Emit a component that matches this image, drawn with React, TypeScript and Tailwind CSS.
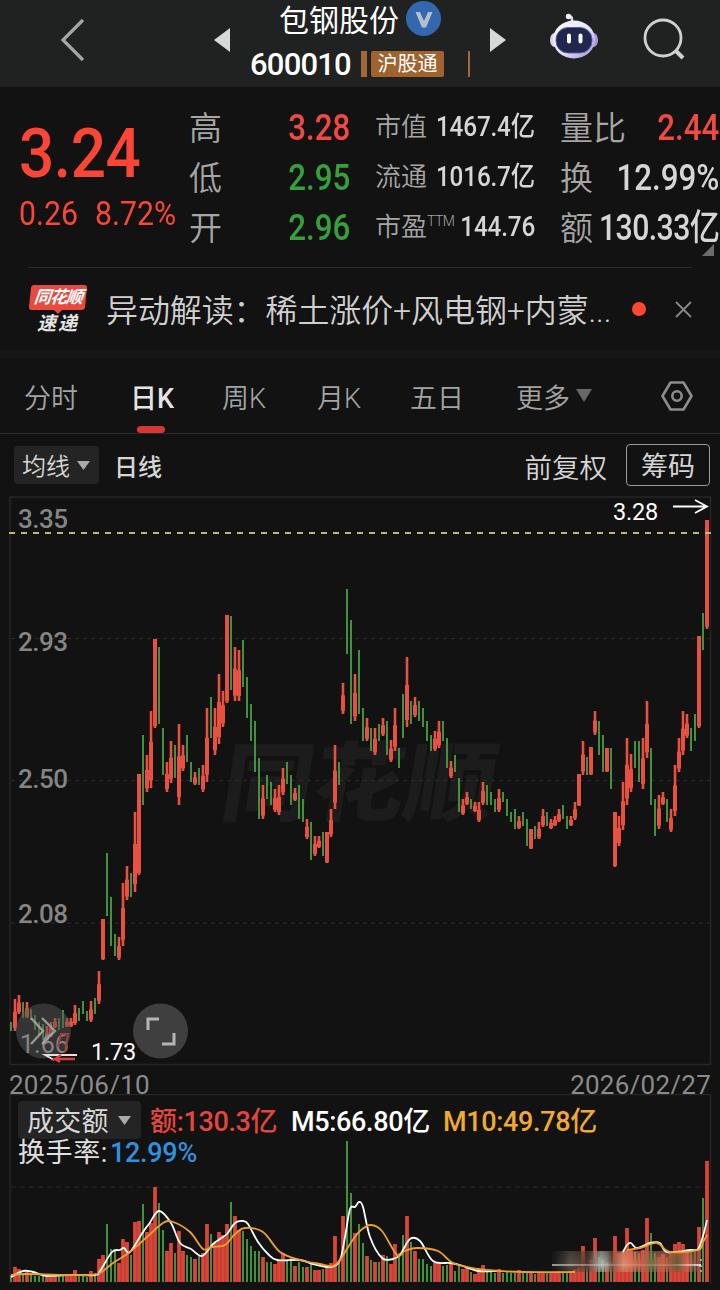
// one entry per trading day: colour (r = up, g = down, R = up with a full body), high y, low y, top of the volume bar
const DAYS = `g 1022 1031 1275|r 999 1031 1267|r 995 1014 1269|g 1002 1018 1273|r 1002 1018 1272|g 1009 1020 1275|g 1015 1030 1276|g 1022 1035 1276|g 1024 1040 1276|r 1026 1042 1274
r 1022 1037 1274|r 1018 1028 1274|g 1018 1030 1275|g 1010 1028 1275|r 1018 1027 1274|r 1018 1027 1274|r 1005 1025 1270|g 1008 1021 1275|g 1001 1014 1275|g 1011 1021 1277
r 1001 1022 1271|g 998 1014 1273|r 971 1004 1259|R 919 960 1255|g 853 916 1224|g 897 946 1249|g 934 956 1250|r 937 960 1263|r 883 946 1239|r 866 900 1242
g 873 897 1255|r 812 892 1222|R 774 875 1221|g 735 805 1204|r 755 792 1232|r 711 788 1223|R 639 728 1187|g 647 724 1203|g 728 775 1230|r 762 792 1251
r 741 783 1243|g 745 778 1253|r 724 805 1231|r 745 771 1251|g 735 762 1255|g 762 782 1257|r 772 785 1259|g 768 785 1255|r 765 792 1253|r 708 782 1224
g 697 738 1234|r 708 755 1243|r 674 744 1232|r 691 727 1235|R 615 703 1224|g 616 690 1202|r 647 701 1216|r 650 701 1230|g 640 687 1231|g 677 718 1239
g 704 741 1246|g 721 772 1251|g 758 819 1251|r 785 819 1257|g 775 799 1262|g 782 805 1262|r 789 812 1264|r 785 815 1260|r 768 795 1253|g 762 784 1260
g 775 805 1257|r 788 801 1266|g 785 819 1262|g 799 822 1267|r 819 839 1267|g 822 860 1264|r 836 856 1270|r 836 848 1270|g 832 856 1269|R 832 863 1267
r 809 837 1263|r 745 809 1236|g 762 785 1260|r 683 714 1216|g 589 654 1141|g 620 724 1193|r 674 721 1233|g 650 714 1224|g 708 741 1243|r 718 741 1256
g 728 751 1260|r 728 755 1262|g 724 741 1262|r 718 736 1255|g 721 755 1256|r 740 762 1264|r 708 751 1244|g 748 768 1253|g 694 738 1235|r 657 727 1216
g 701 724 1242|r 697 717 1251|g 701 721 1259|g 708 727 1259|g 721 741 1264|g 735 751 1266|r 731 751 1263|r 721 748 1263|g 721 741 1266|g 738 768 1265
r 761 778 1262|g 755 772 1271|g 778 812 1265|r 799 815 1269|r 792 805 1268|g 799 809 1272|r 802 812 1274|r 802 822 1272|r 782 805 1265|g 785 805 1272
g 792 805 1272|g 799 812 1273|r 789 812 1269|g 792 802 1273|g 799 816 1272|g 812 822 1273|g 809 829 1273|r 816 829 1270|g 812 826 1273|g 819 846 1272
R 829 849 1272|g 826 839 1274|r 822 839 1273|r 809 827 1272|g 812 826 1273|r 819 829 1272|r 816 826 1272|r 809 822 1271|g 805 819 1271|g 816 829 1272
r 816 826 1271|r 802 820 1269|R 774 806 1267|r 741 775 1246|g 757 775 1266|R 747 775 1260|r 711 735 1238|g 721 755 1257|g 735 772 1260|R 748 772 1262
g 748 789 1262|R 812 867 1236|r 816 846 1253|r 782 830 1252|r 738 805 1228|r 754 792 1250|g 741 768 1252|g 741 782 1253|r 738 789 1250|r 701 758 1218
g 748 805 1233|g 799 836 1253|r 795 829 1257|r 792 805 1254|g 799 822 1257|r 809 832 1252|r 765 816 1244|r 738 772 1242|r 711 755 1244|r 714 738 1250
g 728 751 1252|g 714 741 1252|R 636 728 1227|g 613 650 1198|R 520 629 1161`
    .split(/[|\n]/)
    .map((day, i) => {
        const [kind, high, low, volume] = day.trim().split(" ")
        return { x: 11 + i * 4, up: kind !== "g", full: kind === "R", high: +high, low: +low, volume: +volume }
    })

const M5 = [[11,1277],[23,1271],[33,1272],[47,1276],[67,1275],[95,1275],[100,1271],[112,1252],[120,1250],[124,1248],[130,1252],[143,1232],[149,1224],[159,1211],[171,1223],[180,1243],[191,1249],[202,1256],[213,1244],[220,1239],[227,1234],[235,1223],[243,1221],[248,1224],[258,1242],[268,1254],[277,1260],[300,1260],[313,1264],[331,1267],[340,1260],[345,1237],[350,1209],[355,1207],[359,1202],[363,1207],[370,1237],[382,1258],[393,1259],[400,1255],[410,1239],[420,1241],[433,1261],[450,1263],[460,1265],[478,1271],[497,1271],[560,1272],[600,1268],[615,1256],[623,1252],[627,1245],[631,1243],[637,1248],[650,1243],[660,1243],[667,1252],[690,1250],[698,1249],[703,1236],[707,1220]]
const M10 = [[11,1275],[27,1274],[67,1275],[97,1274],[113,1263],[130,1252],[147,1237],[163,1223],[173,1222],[190,1232],[203,1249],[212,1247],[225,1245],[235,1234],[245,1228],[263,1232],[280,1252],[300,1260],[320,1264],[333,1266],[340,1260],[352,1241],[361,1230],[371,1225],[382,1231],[397,1255],[405,1251],[417,1248],[438,1251],[453,1263],[478,1269],[500,1271],[523,1272],[575,1272],[600,1268],[613,1260],[627,1250],[640,1248],[657,1243],[670,1252],[698,1250],[703,1242],[707,1235]]

// rounded line through the given points
const smooth = (points: number[][]) =>
    points.reduce((d, [x, y], i) => {
        if (i === 0) return `M${x} ${y}`
        const [px, py] = points[i - 1]
        const [ax, ay] = points[i - 2] ?? [px, py]
        const [nx, ny] = points[i + 1] ?? [x, y]
        return `${d}C${px + (x - ax) / 6} ${py + (y - ay) / 6} ${x - (nx - px) / 6} ${y - (ny - py) / 6} ${x} ${y}`
    }, "")

const RED = "#e8503f"
const GREEN = "#41913f"

const Robot = () => (
    <svg className="h-12 w-12" viewBox="0 0 48 48">
        <defs>
            <linearGradient id="shell" x1="0" y1="0" x2="1" y2="1">
                <stop offset="0" stopColor="#fff" />
                <stop offset=".55" stopColor="#e6e2f8" />
                <stop offset="1" stopColor="#9a86dc" />
            </linearGradient>
        </defs>
        <path d="M22 10V7q0-3-4-3" fill="none" stroke="#dcdcf0" strokeWidth="2.500" />
        <circle cx="18.500" cy="4.500" r="2.700" fill="#f2f2fa" />
        <ellipse cx="4.500" cy="28" rx="4.500" ry="7" fill="#d7d3f1" />
        <ellipse cx="43.500" cy="28" rx="4.500" ry="7" fill="#a79ae2" />
        <ellipse cx="24" cy="27.500" rx="21" ry="19" fill="url(#shell)" />
        <rect x="6" y="15.500" width="36" height="25.500" rx="12" fill="#20264d" stroke="#59629a" strokeWidth="1" />
        <path d="M19 23.500v6M30.500 23.500v6" stroke="#fff" strokeWidth="4" strokeLinecap="round" />
    </svg>
)

const Header = () => (
    <header className="flex h-[87px] items-start bg-[#202221] text-white">
        <svg className="ml-[60px] mt-[18px] h-[44px] w-[26px]" viewBox="0 0 26 44" fill="none" stroke="#a6a6a6" strokeWidth="3.200">
            <path d="M23 2L3 22l20 20" />
        </svg>
        <svg className="ml-[128px] mt-[28px] h-6 w-4" viewBox="0 0 16 24"><path d="M16 0v24L0 12z" fill="#d8d8d8" /></svg>
        <div className="ml-[20px] flex w-[220px] flex-col">
            <div className="flex h-[41px] items-center pl-[29px] text-[30px] leading-none">
                <span className="whitespace-nowrap">包钢股份</span>
                <svg className="-mt-1 ml-[7px] h-[35px] w-[35px]" viewBox="0 0 35 35">
                    <circle cx="17.500" cy="17.500" r="17.500" fill="#3468ae" />
                    <path d="M9.500 11h4.500l4 9 4-9h4.500l-6.500 15.500h-4z" fill="#b4bfcb" />
                </svg>
            </div>
            <div className="flex h-[46px] items-center">
                <span className="w-[111px] text-[31px] font-medium leading-none tracking-[-0.800px]">600010</span>
                <i className="h-[26px] w-[6px] bg-[#a26837]" />
                <span className="ml-1 flex h-[26px] w-[73px] items-center justify-center rounded-[2px] bg-[#a0632f] text-[20px] leading-none">沪股通</span>
                <i className="ml-[24px] h-[26px] w-[2px] bg-[#a26837]" />
            </div>
        </div>
        <svg className="ml-[20px] mt-[28px] h-6 w-4" viewBox="0 0 16 24"><path d="M0 0v24l16-12z" fill="#d8d8d8" /></svg>
        <div className="ml-[44px] mt-[12px]"><Robot /></div>
        <svg className="ml-[45px] mt-[18px] h-[42px] w-[42px]" viewBox="0 0 42 42" fill="none" stroke="#d0d0d0" strokeWidth="2.800">
            <circle cx="20" cy="20" r="18" />
            <path d="M33 33l7 7" strokeWidth="4" />
        </svg>
    </header>
)

const Price = () => {
    const row = "flex h-[50px] items-center justify-between whitespace-nowrap"
    const big = "mt-[3px] origin-right scale-x-[0.870] text-[36px] font-medium leading-none"
    const label = "mt-1 text-[33px] font-[350] leading-none text-[#a6a6a6]"
    const small = "mt-[2px] text-[26px] font-[350] leading-none text-[#a6a6a6]"
    const value = "mt-[2px] origin-right scale-x-[0.900] text-[27px] font-medium leading-none tracking-[-0.200px] text-[#d6d6d6]"
    return (
        <section className="relative grid h-[180px] grid-cols-[170px_161px_25px_160px_25px_159px] pl-[19px] pt-[14px]">
            <div className="text-[#fb4636]">
                <p className="mt-[19px] origin-left scale-x-[0.900] text-[69px] font-medium leading-[68px] tracking-[-0.500px]">3.24</p>
                <p className="mt-[8px] flex origin-left scale-x-[0.890] gap-[19px] whitespace-nowrap text-[34px] leading-[34px]"><span>0.26</span><span>8.72%</span></p>
            </div>
            <div>
                <p className={row}><span className={label}>高</span><span className={`${big} text-[#f24a42]`}>3.28</span></p>
                <p className={row}><span className={label}>低</span><span className={`${big} text-[#35a13c]`}>2.95</span></p>
                <p className={row}><span className={label}>开</span><span className={`${big} text-[#35a13c]`}>2.96</span></p>
            </div>
            <div className="col-start-4 [direction:ltr]">
                <p className={row}><span className={`${small} w-[50px]`}>市值</span><span className={value}>1467.4亿</span></p>
                <p className={row}><span className={`${small} w-[50px]`}>流通</span><span className={value}>1016.7亿</span></p>
                <p className={row}><span className={`${small} flex w-[70px]`}>市盈<sup className="top-0 text-[14px] leading-[15px] tracking-[-0.500px]">TTM</sup></span><span className={value}>144.76</span></p>
            </div>
            <div className="col-start-6">
                <p className={row}><span className={label}>量比</span><span className={`${big} text-[#f24a42]`}>2.44</span></p>
                <p className={row}><span className={label}>换</span><span className={`${big} text-[#d6d6d6]`}>12.99%</span></p>
                <p className={row}>
                    <span className={label}>额</span>
                    <span className="ml-[6px] mt-[3px] w-[120px] origin-left scale-x-[0.840] text-[36px] font-medium leading-none tracking-[-0.700px] text-[#d6d6d6]">130.33亿</span>
                </p>
            </div>
            <svg className="absolute right-[6px] top-[157px] h-3 w-3" viewBox="0 0 12 12"><path d="M12 0v12H0z" fill="#6b6b6b" /></svg>
        </section>
    )
}

const News = () => (
    <section className="mx-7 flex h-[83px] items-center border-t border-[#2c2c2c] text-[#d0d0d0]">
        <div className="flex w-[60px] flex-col items-center text-[17px] font-black italic leading-none text-white">
            <span className="flex h-[25px] w-[56px] -skew-x-6 items-center justify-center rounded-[3px] bg-[#e64b40] font-bold tracking-[-1px]">同花顺</span>
            <i className="h-0 w-0 border-x-4 border-t-4 border-x-transparent border-t-[#e64b40]" />
            <span className="text-[19px] font-bold tracking-[2px] text-[#e4e4e4]">速递</span>
        </div>
        <p className="ml-[18px] mt-[3px] w-[508px] whitespace-nowrap text-[32px] font-[350] leading-none tracking-[-0.100px]">异动解读：稀土涨价+风电钢+内蒙...</p>
        <i className="ml-[18px] h-[14px] w-[14px] rounded-full bg-[#ff4733]" />
        <svg className="ml-auto h-[17px] w-[17px]" viewBox="0 0 17 17" stroke="#888" strokeWidth="1.800"><path d="M1 1l15 15M16 1L1 16" /></svg>
    </section>
)

const Tabs = () => (
    <nav className="flex h-[76px] items-center border-b border-[#2a2a2a] pl-[24px] text-[27px] font-[350] leading-none text-[#a4a4a4]">
        <span className="mt-2 w-[106px]">分时</span>
        <span className="relative mt-2 w-[92px] font-medium text-[#e4e4e4]">
            日K
            <i className="absolute left-[7px] top-[40px] h-[7px] w-[28px] rounded-full bg-[#d83535]" />
        </span>
        <span className="mt-2 w-[95px]">周K</span>
        <span className="mt-2 w-[93px]">月K</span>
        <span className="mt-2 w-[106px]">五日</span>
        <span className="mt-2 w-[60px]">更多</span>
        <svg className="h-[13px] w-4" viewBox="0 0 16 13"><path d="M0 0h16L8 13z" fill="#686868" /></svg>
        <svg className="ml-[69px] h-[30px] w-[32px]" viewBox="0 0 32 30" fill="none" stroke="#8d8d8d" strokeWidth="2.600">
            <path d="M9.500 1.500h13L30.500 15l-8 13.500h-13L1.500 15z" strokeLinejoin="round" />
            <circle cx="16" cy="15" r="4.700" />
        </svg>
    </nav>
)

const Caret = () => (
    <svg className="h-[9px] w-[13px]" viewBox="0 0 13 9"><path d="M0 0h13L6.500 9z" fill="#aaa" /></svg>
)

const Toolbar = () => (
    <div className="flex h-[62px] items-center pl-[14px] pr-[10px] text-[#d6d6d6]">
        <span className="flex h-[38px] w-[85px] items-center gap-[7px] rounded-[4px] bg-[#242424] pl-2 text-[24px] font-[350] leading-none">
            <span className="mt-[3px]">均线</span><Caret />
        </span>
        <span className="ml-[15px] mt-[6px] text-[24px] font-medium leading-none">日线</span>
        <span className="ml-auto mt-[7px] text-[27.500px] font-[350] leading-none">前复权</span>
        <span className="ml-[19px] flex h-[42px] w-[84px] items-center justify-center rounded-[4px] border border-[#9a9a9a] pt-1 text-[27px] leading-none">筹码</span>
    </div>
)

const PriceChart = () => (
    <svg className="block h-[570px] w-[720px]" viewBox="0 496 720 570">
        <text transform="translate(218 814) skewX(-9)" textLength="274" lengthAdjust="spacingAndGlyphs" fontSize="86" fontWeight="900" fill="#1c1c1c">同花顺</text>
        <rect x="10" y="497" width="700.500" height="567.500" fill="none" stroke="#262626" strokeWidth="1.500" />
        <path d="M11 638.500H710M11 780.500H710M11 923H710" stroke="#2b2b2b" strokeWidth="1.200" strokeDasharray="4 4" />
        {DAYS.map(({ x, up, full, high, low }) => (
            <g key={x} fill={up ? RED : GREEN}>
                <rect x={up ? x - 1.3 : x - 1} y={high} width={up ? 2.6 : 2} height={low - high} />
                {up && <rect x={x - 2} y={full ? high : high + (low - high) * 0.4} width="4" height={(low - high) * (full ? 0.98 : 0.5)} />}
            </g>
        ))}
        <path d="M9 533H711" stroke="#c6b579" strokeWidth="1.800" strokeDasharray="6 6" />
        <g fontSize="26" fontWeight="500" fill="#858585">
            <text x="18" y="528" textLength="50">3.35</text>
            <text x="18" y="651" textLength="50">2.93</text>
            <text x="18" y="788" textLength="50">2.50</text>
            <text x="18" y="923" textLength="50">2.08</text>
        </g>
        <g fill="#fff" fontSize="23.500" letterSpacing="-.2">
            <text x="613" y="520">3.28</text>
            <text x="91" y="1060">1.73</text>
        </g>
        <path d="M673 506.500H707M695 500l12 6.500-12 6.500" fill="none" stroke="#fff" strokeWidth="1.800" />
        <circle cx="43.500" cy="1031" r="27.500" fill="#555" fillOpacity=".5" />
        <text x="20" y="1053" fontSize="25" fill="#858585">1.66</text>
        <path d="M58 1047l3-13h7l-3 18" fill="none" stroke="#a33d38" strokeWidth="2" />
        <path d="M31 1018l12 13-12 13M42 1018l13 13-13 13" fill="none" stroke="#b0b0b0" strokeWidth="2.400" strokeOpacity=".8" />
        <path d="M77 1055H45l9 5" fill="none" stroke="#e5dede" strokeWidth="1.800" />
        <path d="M75 1059H55l6-4M55 1059l5 3" fill="none" stroke="#d8413d" strokeWidth="2.500" />
        <circle cx="160.500" cy="1031" r="27.500" fill="#3f3f3f" />
        <path d="M148 1030v-11h11M174 1033v11h-12" fill="none" stroke="#b5b5b5" strokeWidth="3" />
    </svg>
)

const Volume = () => (
    <section className="grid h-[196px]">
        <svg className="h-[196px] w-[720px] [grid-area:1/1]" viewBox="0 1094 720 196">
            <defs>
                <linearGradient id="smear">
                    <stop offset="0" stopColor="#3a332f" stopOpacity=".2" />
                    <stop offset=".12" stopColor="#5c574c" />
                    <stop offset=".24" stopColor="#5a3a30" />
                    <stop offset=".29" stopColor="#8a7f74" />
                    <stop offset=".33" stopColor="#b9c1b4" />
                    <stop offset=".37" stopColor="#98998e" />
                    <stop offset=".4" stopColor="#7c5240" />
                    <stop offset=".48" stopColor="#dd8f70" />
                    <stop offset=".6" stopColor="#d35f49" />
                    <stop offset=".66" stopColor="#76754f" />
                    <stop offset=".75" stopColor="#cf5f4a" />
                    <stop offset=".84" stopColor="#57603a" />
                    <stop offset=".91" stopColor="#d8654f" />
                    <stop offset="1" stopColor="#6a5348" stopOpacity=".6" />
                </linearGradient>
                <linearGradient id="fade" x1="0" y1="0" x2="0" y2="1">
                    <stop offset="0" stopColor="#fff" stopOpacity=".6" />
                    <stop offset=".65" stopColor="#fff" stopOpacity=".95" />
                    <stop offset="1" stopColor="#fff" stopOpacity=".5" />
                </linearGradient>
                <linearGradient id="streak">
                    <stop offset="0" stopColor="#ddd" stopOpacity=".7" />
                    <stop offset=".5" stopColor="#ddd" stopOpacity=".15" />
                    <stop offset=".8" stopColor="#ddd" stopOpacity=".2" />
                    <stop offset="1" stopColor="#fff" stopOpacity=".8" />
                </linearGradient>
                <mask id="band"><rect x="552" y="1251" width="149" height="21" fill="url(#fade)" /></mask>
            </defs>
            <path d="M10 1283V1094.500H710.500V1283" fill="none" stroke="#262626" strokeWidth="1.500" />
            <path d="M11 1187H706" stroke="#2b2b2b" strokeWidth="1.200" strokeDasharray="5 4" />
            {DAYS.map(({ x, up, volume }) => (
                <rect key={x} x={up ? x - 1.9 : x - 1} y={volume} width={up ? 3.8 : 2} height={1282 - volume} fill={up ? "#d94637" : GREEN} />
            ))}
            <g mask="url(#band)">
                <rect x="552" y="1251" width="149" height="21" fill="url(#smear)" />
                <rect x="552" y="1264" width="149" height="2" fill="url(#streak)" />
            </g>
            <path d={smooth(M5.filter(([x]) => x < 560))} fill="none" stroke="#fff" strokeWidth="1.800" />
            <path d={smooth(M5.filter(([x]) => x > 620))} fill="none" stroke="#fff" strokeWidth="1.800" />
            <path d={smooth(M10.filter(([x]) => x < 580))} fill="none" stroke="#eba12c" strokeWidth="1.800" />
            <path d={smooth(M10.filter(([x]) => x > 620))} fill="none" stroke="#eba12c" strokeWidth="1.800" />
            <path d="M700 1260h2M699 1266h3M700 1271h2" stroke="#fff" strokeWidth="1.200" />
        </svg>
        <div className="pl-[18px] pt-[7px] [grid-area:1/1]">
            <div className="flex h-[38px] items-center whitespace-nowrap text-[27px] font-medium leading-none tracking-[-0.350px]">
                <span className="flex h-[38px] w-[123px] items-center gap-[9px] rounded-[4px] bg-[#242424] pl-[9px] font-normal tracking-[0.200px] text-[#d8d8d8]">
                    <span className="mt-1">成交额</span><Caret />
                </span>
                <span className="ml-[9px] mt-1 w-[141px] text-[#e4453c]">额:130.3亿</span>
                <span className="mt-1 w-[152px] text-white">M5:66.80亿</span>
                <span className="mt-1 text-[#f0aa30]">M10:49.78亿</span>
            </div>
            <p className="-mt-[2px] flex whitespace-nowrap text-[27px] leading-[32px] text-[#e0e0e0]">
                <span className="w-[92px] tracking-[0.600px]">换手率:</span>
                <span className="font-medium tracking-[-0.300px] text-[#3191de]">12.99%</span>
            </p>
        </div>
    </section>
)

const App = () => {
    return (
        <main className="flex h-[1290px] w-[720px] flex-col overflow-hidden bg-[#121212] font-['Roboto','Noto_Sans_CJK_SC',sans-serif]">
            <Header />
            <Price />
            <News />
            <div className="h-2 bg-[#161616]" />
            <Tabs />
            <Toolbar />
            <PriceChart />
            <div className="flex h-[28px] items-center justify-between px-[9px] pt-[9px] text-[26px] leading-none tracking-[0.250px] text-[#8b8b8b]">
                <span>2025/06/10</span>
                <span>2026/02/27</span>
            </div>
            <Volume />
        </main>
    )
}

export default App
